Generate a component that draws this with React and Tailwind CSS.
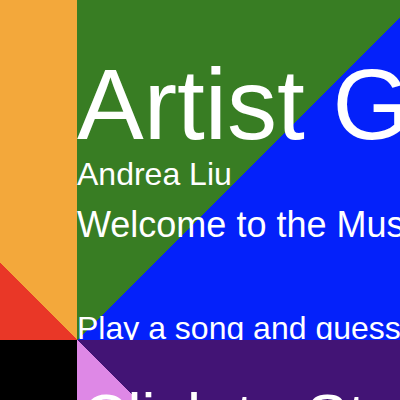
export default function App() {
  return (
    <div className="h-screen w-full overflow-hidden bg-black font-['Liberation_Sans',Arial,sans-serif] text-white">
      <div className="grid grid-cols-[77px_340px] grid-rows-[340px_340px]">
        {/* Left column: orange with red corner */}
        <div className="flex flex-col bg-[#F3A83B]">
          <div className="flex-1" />
          <div className="h-[77px] w-[77px] bg-[linear-gradient(45deg,#E93727_50%,#F3A83B_50%)]" />
        </div>

        {/* Main panel */}
        <div className="flex flex-col whitespace-nowrap bg-[linear-gradient(135deg,#387D23_50%,#0421FA_50%)]">
          <h1 className="mt-[54px] text-[100px] leading-[100px]">Artist Guesser</h1>
          <p className="mt-[4px] text-[32px] leading-[32px]">Andrea Liu</p>
          <h2 className="mt-[17px] text-[36px] leading-[36px]">Welcome to the Music Quiz!</h2>
          <p className="mt-[69px] text-[32px] leading-[32px]">Play a song and guess the artist</p>
        </div>

        <div className="bg-black" />

        {/* Bottom panel */}
        <div className="flex flex-col whitespace-nowrap bg-[linear-gradient(45deg,#DE88E6_50%,#421475_50%)]">
          <button className="mt-[45px] self-start pl-[5px] text-[63px] leading-[63px]">Click to Start</button>
        </div>
      </div>
    </div>
  )
}
